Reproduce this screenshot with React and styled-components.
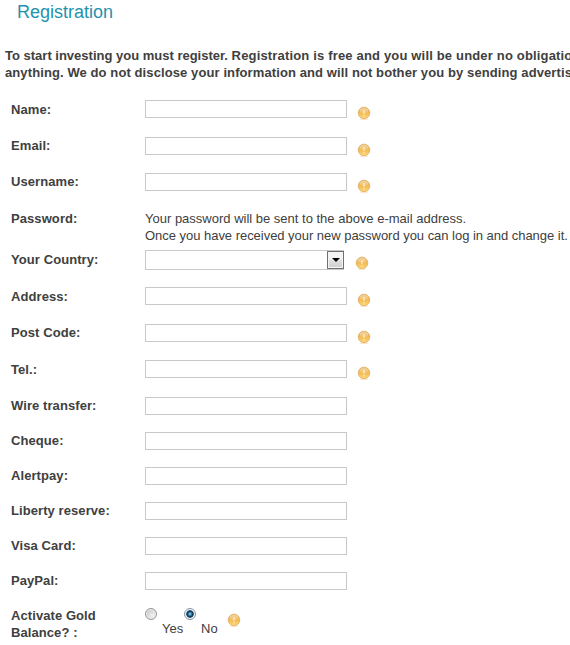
import React, { useState } from "react";
import styled, { createGlobalStyle } from "styled-components";

const GlobalStyle = createGlobalStyle`
  body {
    margin: 0;
    background: #fff;
    overflow: hidden;
    color: #404040;
    font: 13px/17px "Liberation Sans", Arial, sans-serif;
  }
`;

const Page = styled.main`
  width: 570px;
  height: 645px;
  overflow: hidden;
`;

const Title = styled.h1`
  margin: 0;
  padding: 2px 0 0 17px;
  height: 45px;
  font-size: 18px;
  line-height: 20px;
  font-weight: 400;
  color: #1f93ae;
`;

const Intro = styled.p`
  margin: 0;
  padding-left: 5px;
  height: 53px;
  font-weight: 700;
  white-space: nowrap;
`;

const IntroLine = styled.span`
  display: block;
  letter-spacing: 0.1px;
`;

const Sentence = styled.span`
  letter-spacing: ${(p) => p.$track};
`;

const Row = styled.div`
  display: grid;
  grid-template-columns: 134px 202px auto;
  align-items: start;
  padding-left: 11px;
  height: ${(p) => p.$height}px;
`;

const Label = styled.label`
  padding-top: ${(p) => (p.$raised ? 0 : 1)}px;
  font-weight: 700;
  letter-spacing: 0.08px;
  white-space: pre-line;
`;

const TextInput = styled.input`
  box-sizing: border-box;
  display: block;
  width: 202px;
  height: 18px;
  margin: 0;
  padding: 1px 3px;
  border: 1px solid #c9c9c9;
  border-radius: 0;
  background: #fff;
  font: inherit;
  outline: none;
`;

const SelectBox = styled.div`
  box-sizing: border-box;
  display: flex;
  justify-content: flex-end;
  width: 199px;
  height: 20px;
  border: 1px solid #c9c9c9;
`;

const SelectButton = styled.button`
  box-sizing: border-box;
  display: flex;
  align-items: center;
  justify-content: center;
  width: 17px;
  height: 18px;
  margin: 0 -1px 0 0;
  padding: 0;
  border: 1px solid #707070;
  border-radius: 0;
  background: linear-gradient(#f4f4f4 0 45%, #e1e1e1 50%, #cfcfcf);
  box-shadow: inset 0 0 0 1px #f5f5f5;
`;

const Note = styled.div`
  grid-column: 2 / 4;
  padding-top: 1px;
  white-space: nowrap;
`;

const NoteLine = styled.span`
  display: block;
  letter-spacing: ${(p) => p.$track};
`;

const IconSlot = styled.span`
  display: flex;
  padding: ${(p) => p.$top}px 0 0 ${(p) => p.$left}px;
`;

const Choices = styled.div`
  display: flex;
  align-items: flex-start;
`;

const Choice = styled.label`
  display: flex;
  width: ${(p) => p.$width}px;
`;

const Radio = styled.input`
  appearance: none;
  box-sizing: border-box;
  flex: none;
  width: 12px;
  height: 12px;
  margin: 1px 5px 0 0;
  border: 1px solid #949494;
  border-radius: 50%;
  background: radial-gradient(circle at 65% 65%, #f2f2f2, #bcbcbc);
  box-shadow: inset 0 0 0 1px #f4f4f4;

  &:checked {
    border-color: #8797a0;
    background: radial-gradient(circle closest-side at 50% 50%, #a5e0f5 0, #3c8fb8 28%, #123d59 52%, #17415f 68%, #edf3f6 82%);
    box-shadow: none;
  }
`;

const ChoiceText = styled.span`
  padding-top: 13px;
`;

function RequiredIcon() {
  return (
    <svg width="14" height="15" viewBox="0 0 14 15" aria-label="Required">
      <defs>
        <linearGradient id="amber" x1="0" y1="0" x2="0" y2="1">
          <stop offset="0" stopColor="#ecca90" />
          <stop offset="0.45" stopColor="#f1b650" />
          <stop offset="1" stopColor="#ffd976" />
        </linearGradient>
      </defs>
      <ellipse cx="7" cy="13" rx="4" ry="1.2" fill="#fae8d2" />
      <circle cx="7" cy="6.9" r="5.8" fill="url(#amber)" stroke="#e0b067" strokeWidth="0.8" />
      <ellipse cx="7" cy="4.6" rx="4.2" ry="2.6" fill="#fff" opacity="0.2" />
      <path d="M7 3.9v3.9M7 9v1.2" stroke="#fff0c6" strokeWidth="1.3" />
    </svg>
  );
}

function Field({ label, height, iconTop, raised }) {
  return (
    <Row $height={height}>
      <Label htmlFor={label} $raised={raised}>{label}</Label>
      <TextInput id={label} />
      {iconTop !== undefined && (
        <IconSlot $top={iconTop} $left={10}><RequiredIcon /></IconSlot>
      )}
    </Row>
  );
}

export default function App() {
  const [gold, setGold] = useState("No");
  return (
    <Page>
      <GlobalStyle />
      <Title>Registration</Title>
      <Intro>
        <IntroLine>
          <Sentence $track="0">To start investing you must register. </Sentence>
          <Sentence $track="0.17px">Registration is free and you will be under no obligation</Sentence>
        </IntroLine>
        <IntroLine>anything. We do not disclose your information and will not bother you by sending advertis</IntroLine>
      </Intro>
      <Field label="Name:" height={37} iconTop={6} />
      <Field label="Email:" height={36} iconTop={6} raised />
      <Field label="Username:" height={36} iconTop={6} raised />
      <Row $height={41}>
        <Label>Password:</Label>
        <Note>
          <NoteLine $track="0">Your password will be sent to the above e-mail address.</NoteLine>
          <NoteLine $track="-0.03px">Once you have received your new password you can log in and change it.</NoteLine>
        </Note>
      </Row>
      <Row $height={37}>
        <Label>Your Country:</Label>
        <SelectBox>
          <SelectButton type="button" aria-label="Choose country">
            <svg width="8" height="4" viewBox="0 0 8 4"><path d="M0 0h8L4 4z" fill="#000" /></svg>
          </SelectButton>
        </SelectBox>
        <IconSlot $top={6} $left={8}><RequiredIcon /></IconSlot>
      </Row>
      <Field label="Address:" height={37} iconTop={6} />
      <Field label="Post Code:" height={36} iconTop={6} raised />
      <Field label="Tel.:" height={37} iconTop={6} />
      <Field label="Wire transfer:" height={35} raised />
      <Field label="Cheque:" height={35} raised />
      <Field label="Alertpay:" height={35} raised />
      <Field label="Liberty reserve:" height={35} raised />
      <Field label="Visa Card:" height={35} raised />
      <Field label="PayPal:" height={35} raised />
      <Row $height={38}>
        <Label $raised>{"Activate Gold\nBalance? :"}</Label>
        <Choices>
          <Choice $width={39}>
            <Radio type="radio" name="gold" checked={gold === "Yes"} onChange={() => setGold("Yes")} />
            <ChoiceText>Yes</ChoiceText>
          </Choice>
          <Choice $width={43}>
            <Radio type="radio" name="gold" checked={gold === "No"} onChange={() => setGold("No")} />
            <ChoiceText>No</ChoiceText>
          </Choice>
          <IconSlot $top={6} $left={0}><RequiredIcon /></IconSlot>
        </Choices>
      </Row>
    </Page>
  );
}
